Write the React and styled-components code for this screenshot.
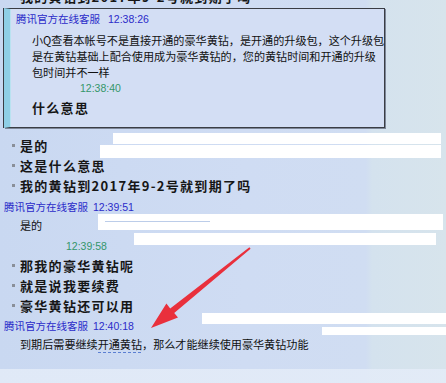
import styled, { createGlobalStyle } from "styled-components";

const GlobalStyle = createGlobalStyle`
  html, body {
    margin: 0;
    padding: 0;
  }
  body {
    font-family: "Liberation Sans", "Noto Sans CJK SC", sans-serif;
  }
`;

const Page = styled.div`
  position: relative;
  width: 446px;
  height: 383px;
  overflow: hidden;
  background:
    linear-gradient(to bottom, transparent 369px, rgba(228, 236, 248, 0.85) 369px),
    linear-gradient(to right, #c9d8f1 0%, #cfdcf3 55%, #d0ddf2 82%, #d4e2ee 83.5%, #d7e4ec 100%);
`;

const Column = styled.div`
  display: flex;
  flex-direction: column;
  padding-left: 4px;
`;

const NameRow = styled.div`
  height: 18px;
  line-height: 18px;
  margin-top: ${(p) => p.$top || 0}px;
  padding-left: ${(p) => p.$indent || 0}px;
  font-size: 10.5px;
  color: #2b2bc9;
  white-space: nowrap;
`;

const Time = styled.span`
  margin-left: ${(p) => p.$gap || 5}px;
`;

const GreenTime = styled.div`
  height: 16px;
  line-height: 16px;
  margin-top: ${(p) => p.$top || 0}px;
  padding-left: ${(p) => p.$indent}px;
  font-size: 10.5px;
  color: #35966a;
`;

const Plain = styled.div`
  line-height: ${(p) => (p.$multi ? "16px" : "18px")};
  margin-top: ${(p) => p.$top || 0}px;
  padding-left: ${(p) => p.$indent}px;
  font-family: "Noto Sans CJK SC", sans-serif;
  font-size: 11.1px;
  color: #111;
  white-space: nowrap;
`;

const Item = styled.div`
  display: flex;
  align-items: center;
  height: 20px;
  margin-top: ${(p) => p.$top || 0}px;
  padding-left: ${(p) => p.$indent}px;
  font-family: "Noto Sans CJK SC", sans-serif;
  font-weight: 700;
  font-size: 13px;
  letter-spacing: 1.3px;
  color: #161616;
  white-space: nowrap;
  &::before {
    content: "";
    display: ${(p) => (p.$dot ? "block" : "none")};
    width: 3px;
    height: 3px;
    margin-right: 5px;
    background: #8a8f99;
  }
`;

const Quote = styled.div`
  box-sizing: border-box;
  width: 381px;
  height: 120px;
  margin-top: 2px;
  border: 1px solid #3a3d44;
  border-left: 6px solid #8fcfe6;
  box-shadow: 1px 1px 0 #7d8698, inset 1px 0 0 #b9e2f0;
  background: #d3def4;
  position: relative;
  &::before {
    content: "";
    position: absolute;
    left: -7px;
    top: -1px;
    bottom: -1px;
    width: 1px;
    background: #3a3d44;
  }
`;

const Linked = styled.span`
  display: inline-block;
  height: 18px;
  background-image: linear-gradient(to right, #5b7fd2 3px, transparent 3px);
  background-size: 5px 1px;
  background-repeat: repeat-x;
  background-position: 0 100%;
`;

const Redact = styled.div`
  position: absolute;
  background: #ffffff;
`;

const RedactLine = styled.div`
  position: absolute;
  height: 1px;
  background: #bccde9;
`;

const ArrowLayer = styled.svg`
  position: absolute;
  left: 0;
  top: 0;
  pointer-events: none;
`;

const blocks = [
  { x: 113, y: 133, w: 328, h: 11 },
  { x: 100, y: 145, w: 341, h: 13 },
  { x: 98, y: 214, w: 345, h: 16 },
  { x: 134, y: 233, w: 302, h: 12 },
  { x: 202, y: 313, w: 244, h: 11 },
  { x: 322, y: 327, w: 124, h: 8 },
];

export default function App() {
  return (
    <>
      <GlobalStyle />
      <Page>
        <Column>
          <Item $dot $indent={8} $top={-14}>
            我的黄钻到2017年9-2号就到期了吗
          </Item>
          <Quote>
            <NameRow $top={1} $indent={6}>
              腾讯官方在线客服<Time $gap={8}>12:38:26</Time>
            </NameRow>
            <Plain $multi $top={4} $indent={22}>
              小Q查看本帐号不是直接开通的豪华黄钻，是开通的升级包，这个升级包
              <br />
              是在黄钻基础上配合使用成为豪华黄钻的，您的黄钻时间和开通的升级
              <br />
              包时间并不一样
            </Plain>
            <GreenTime $indent={70}>12:38:40</GreenTime>
            <Item $top={1} $indent={22}>
              什么意思
            </Item>
          </Quote>
          <Item $dot $indent={8} $top={7}>
            是的
          </Item>
          <Item $dot $indent={8}>
            这是什么意思
          </Item>
          <Item $dot $indent={8}>
            我的黄钻到2017年9-2号就到期了吗
          </Item>
          <NameRow $top={3}>
            腾讯官方在线客服<Time>12:39:51</Time>
          </NameRow>
          <Plain $indent={16}>是的</Plain>
          <GreenTime $top={4} $indent={62}>
            12:39:58
          </GreenTime>
          <Item $dot $indent={8} $top={1}>
            那我的豪华黄钻呢
          </Item>
          <Item $dot $indent={8}>
            就是说我要续费
          </Item>
          <Item $dot $indent={8}>
            豪华黄钻还可以用
          </Item>
          <NameRow $top={2}>
            腾讯官方在线客服<Time>12:40:18</Time>
          </NameRow>
          <Plain $indent={16}>
            到期后需要继续<Linked>开通黄钻</Linked>，那么才能继续使用豪华黄钻功能
          </Plain>
        </Column>

        {blocks.map((b, i) => (
          <Redact
            key={i}
            style={{ left: b.x, top: b.y, width: b.w, height: b.h }}
          />
        ))}
        <RedactLine style={{ left: 105, top: 221, width: 105 }} />

        <ArrowLayer width="446" height="383" viewBox="0 0 446 383">
          <polygon
            fill="#e9303c"
            points="151,328 178,317.5 174.2,313 250.6,248.8 249.4,247.2 170.2,308.4 166.4,303.5"
          />
        </ArrowLayer>
      </Page>
    </>
  );
}
